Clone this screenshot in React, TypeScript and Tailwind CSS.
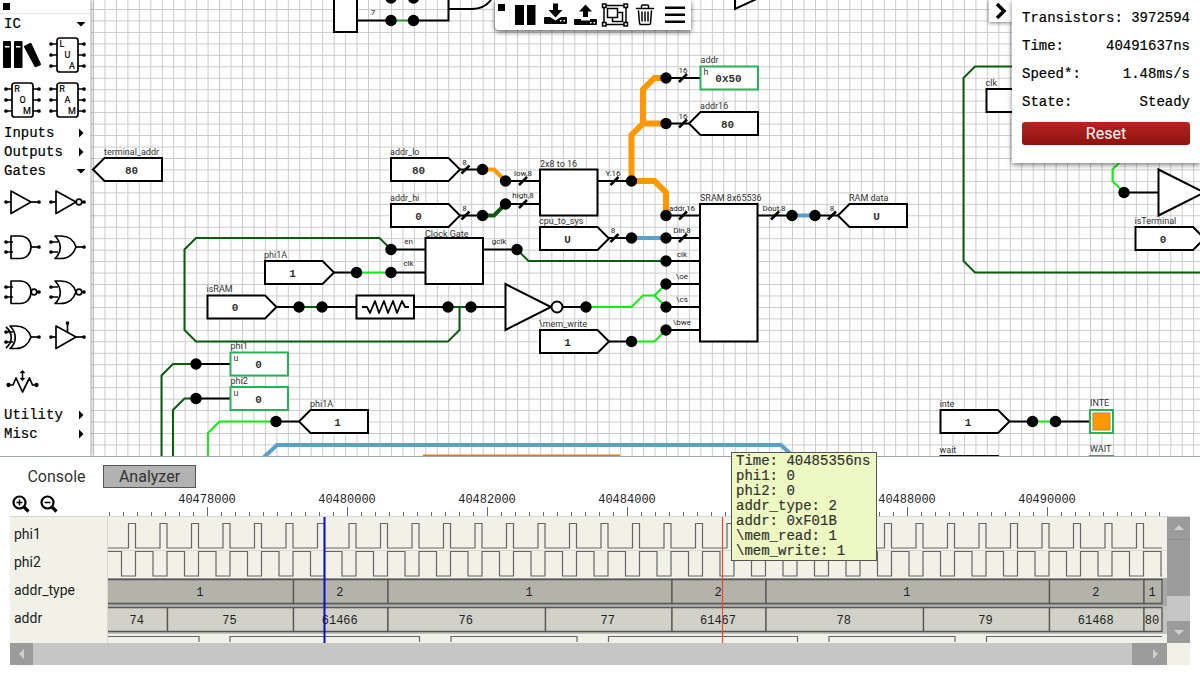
import { ReactNode, useState } from "react";

const DARK = "#0b5c0f";
const LIME = "#12ee12";
const ORANGE = "#ff9800";
const BLUE = "#5b9fca";
const PROBE = "#25b356";
const MONO = "font-['Liberation_Mono',monospace]";
const SANS = "font-[Roboto,sans-serif]";

/* ---------- palette icons ---------- */

const Chip = ({ letters }: { letters: string }) => (
  <>
    <rect x="12" y="5" width="21" height="34" rx="2.5" />
    {[11, 22, 33].map((y) => (
      <g key={y}>
        <path d={`M6 ${y}H12M33 ${y}H39`} />
        <circle cx="6" cy={y} r="1" fill="#000" />
        <circle cx="39" cy={y} r="1" fill="#000" />
      </g>
    ))}
    <g className={SANS} fontSize="9" fill="#000" stroke="#000" strokeWidth="0.2" textAnchor="middle">
      <text x="17" y="14">{letters[0]}</text>
      <text x="22.500" y="25">{letters[1]}</text>
      <text x="27" y="36">{letters[2]}</text>
    </g>
  </>
);

const twoInputs = (
  <>
    <path d="M6 17H13M6 27H13" />
    <circle cx="6" cy="17" r="1" fill="#000" />
    <circle cx="6" cy="27" r="1" fill="#000" />
  </>
);

const output = (
  <>
    <path d="M31 22H39" />
    <circle cx="39" cy="22" r="1" fill="#000" />
  </>
);

const invertedOutput = (
  <>
    <circle cx="34" cy="22" r="2.8" fill="#fff" />
    <path d="M37 22H39" />
    <circle cx="39" cy="22" r="1" fill="#000" />
  </>
);

const oneInput = (
  <>
    <path d="M6 22H11" />
    <circle cx="6" cy="22" r="1" fill="#000" />
  </>
);

const andBody = <path d="M11 11H20C27 11 31 16 31 22S27 33.500 20 33.500H11Z" />;
const orBody = <path d="M10 11H16C24 11 29 16 31 22C29 28 24 33.500 16 33.500H10C17 27 17 18 10 11Z" />;
const triangle = <path d="M11 11L31 22L11 33.500Z" />;

const books = (
  <g fill="#000" stroke="none">
    <path fillRule="evenodd" d="M4 8H10Q11 8 11 9V34Q11 35 10 35H4Q3 35 3 34V9Q3 8 4 8ZM5 13V14.500H9.500V13Z" />
    <path fillRule="evenodd" d="M15 8H21.500Q22.500 8 22.500 9V34Q22.500 35 21.500 35H15Q14 35 14 34V9Q14 8 15 8ZM16 13V14.500H20.500V13Z" />
    <path d="M24 13L30 10Q31 9.500 31.500 10.500L41 31Q41 32 40 32.500L36 34Q35 34.500 34.500 33.500L24 14Z" />
  </g>
);

const icParts: [string, ReactNode][] = [
  ["Library", books],
  ["Lua", <Chip letters="LUA" />],
  ["ROM", <Chip letters="ROM" />],
  ["RAM", <Chip letters="RAM" />],
];

const gateParts: [string, ReactNode][] = [
  ["Buffer", <>{oneInput}{triangle}{output}</>],
  ["Not", <>{oneInput}{triangle}{invertedOutput}</>],
  ["And", <>{twoInputs}{andBody}{output}</>],
  ["Or", <>{twoInputs}{orBody}{output}</>],
  ["Nand", <>{twoInputs}{andBody}{invertedOutput}</>],
  ["Nor", <>{twoInputs}{orBody}{invertedOutput}</>],
  ["Xor", <>{twoInputs}{orBody}<path d="M6 12C13 18 13 27 6 33" />{output}</>],
  ["Tri-state", <>{oneInput}{triangle}{output}<path d="M22.500 8V17" /><circle cx="22.500" cy="8" r="1" fill="#000" /></>],
  [
    "Pull",
    <>
      <circle cx="8.500" cy="25" r="1.300" fill="#000" />
      <circle cx="36.500" cy="25" r="1.300" fill="#000" />
      <path d="M9 25H13L16 18L22.500 32L29.500 18L32.500 25H36" />
      <path d="M22.500 11V20M20.500 13L22.500 11L24.500 13M20.500 18L22.500 20L24.500 18" strokeWidth="1.500" />
    </>,
  ],
];

const PaletteGrid = ({ parts }: { parts: [string, ReactNode][] }) => (
  <div className="grid grid-cols-2">
    {parts.map(([name, icon]) => (
      <button key={name} aria-label={name} className="size-[45px]">
        <svg viewBox="0 0 45 45" className="size-full" fill="none" stroke="#000" strokeWidth="1.700" strokeLinejoin="round">
          {icon}
        </svg>
      </button>
    ))}
  </div>
);

const PaletteHeader = ({ title, open = false }: { title: string; open?: boolean }) => (
  <button aria-expanded={open} className={`flex h-[19px] w-full items-center justify-between px-1 text-sm leading-none ${MONO}`}>
    <span className="[-webkit-text-stroke:0.2px_#000]">{title}</span>
    <svg className="size-[10px]" viewBox="0 0 10 10">
      {open ? <path d="M0.500 3H9.500L5 7.500Z" /> : <path d="M3 0.500V9.500L7.500 5Z" />}
    </svg>
  </button>
);

const Palette = () => (
  <aside className="z-10 w-[91px] shrink-0 border-r border-gray-300 bg-white shadow-[1px_0_3px_rgba(0,0,0,0.3)]">
    <div className="flex h-[14px] items-center border-b border-gray-200 pl-[3px]">
      <span className="size-[7px] bg-black" />
    </div>
    <PaletteHeader title="IC" open />
    <PaletteGrid parts={icParts} />
    <PaletteHeader title="Inputs" />
    <PaletteHeader title="Outputs" />
    <PaletteHeader title="Gates" open />
    <PaletteGrid parts={gateParts} />
    <PaletteHeader title="Utility" />
    <PaletteHeader title="Misc" />
  </aside>
);

/* ---------- circuit ---------- */

type TagProps = { x: number; y: number; label: string; value?: string };

const Label = ({ x, y, children }: { x: number; y: number; children: ReactNode }) => (
  <text x={x} y={y} fontSize="9" fill="#333">{children}</text>
);

const Pin = ({ x, y, children }: { x: number; y: number; children: ReactNode }) => (
  <text x={x} y={y} fontSize="8" fill="#222" textAnchor="middle">{children}</text>
);

const Value = ({ x, y, children }: { x: number; y: number; children: ReactNode }) => (
  <text x={x} y={y + 4} fontSize="11" fontWeight="700" fill="#333" textAnchor="middle" className={MONO}>{children}</text>
);

const InputTag = ({ x, y, label, value }: TagProps) => (
  <g>
    <path d={`M${x} ${y - 11.5}h57.500l11.500 11.500l-11.500 11.500h-57.500z`} fill="#fff" stroke="#000" strokeWidth="2" />
    <Label x={x - 1} y={y - 15}>{label}</Label>
    {value && <Value x={x + 27.5} y={y}>{value}</Value>}
  </g>
);

const OutputTag = ({ x, y, label, value }: TagProps) => (
  <g>
    <path d={`M${x} ${y}l11.500 -11.500h57.500v23h-57.500z`} fill="#fff" stroke="#000" strokeWidth="2" />
    <Label x={x + 11} y={y - 15}>{label}</Label>
    <Value x={x + 38.5} y={y}>{value}</Value>
  </g>
);

const Probe = ({ x, y, label, value, mode }: TagProps & { mode: string }) => (
  <g>
    <rect x={x} y={y - 11.5} width="57.500" height="23" fill="#fff" stroke={PROBE} strokeWidth="2" />
    <Label x={x} y={y - 15}>{label}</Label>
    <text x={x + 3} y={y - 3} fontSize="9" fill="#333">{mode}</text>
    <Value x={x + 28} y={y}>{value}</Value>
  </g>
);

const wires = [
  { color: DARK, width: 2, d: "M391 249.500L379.500 238H196L184.500 249.500V330L196 341.500H448L459.500 330V307" },
  { color: DARK, width: 2, d: "M448 307H471M299 307H322M517 249.500L528.500 261H666" },
  { color: DARK, width: 2, d: "M196 364H173L161.500 375.500V900M196 398.500H184.500L173 410V900" },
  { color: DARK, width: 2, d: "M1200 66.500H975L963.500 78V261L975 272.500H1400" },
  { color: "#2a9a2a", width: 2, d: "M391 20.500H413" },
  { color: LIME, width: 2, d: "M356.500 272.500H391M276 421.500H219.500L208 433V900M1032.500 421.500H1055" },
  { color: LIME, width: 2, d: "M586 307H631.500L643 295.500H654.500L666 284M654.500 295.500L666 307" },
  { color: LIME, width: 2, d: "M631.500 341.500H654.500L666 330M1124 158L1112.500 169.500V181L1124 192.500" },
  { color: ORANGE, width: 4, d: "M482.500 169.500H494L505.500 181" },
  { color: DARK, width: 4, d: "M482.500 215.500H494L505.500 204" },
  { color: ORANGE, width: 6, d: "M666 78H654.500L643 89.500V123.500L631.500 135V181H654.500L666 192.500V215.500M643 123.500H666" },
  { color: BLUE, width: 4, d: "M631.500 238H666M792 215.500H815M262 459L277 445H781L796 459" },
  { color: "#d98200", width: 3, d: "M423 456H620" },
];

const leads =
  "M459.500 169.500H482.500M459.500 215.500H482.500M505.500 181H540M505.500 204H540M597.500 181H631.500" +
  "M666 78H700M666 123.500H689M608.500 238H631.500M666 215.500H700M666 238H700M666 261H700M666 284H700" +
  "M666 307H700M666 330H700M757.500 215.500H792M815 215.500H838M391 249.500H425M391 272.500H425" +
  "M482.500 249.500H517M333.500 272.500H356.500M276 307H299M322 307H357M414 307H448M471 307H506" +
  "M563 307H586M608.500 341.500H631.500M196 364H230M196 398.500H230M276 421.500H299" +
  "M357 20.500H391M413 20.500H448.500V0M448.500 9H472Q484 9 491 0M1124 192.500H1158M1009 421.500H1032.500M1055 421.500H1089";

const slashes: [number, number][] = [
  [465.5, 169.5], [465.5, 215.5], [523, 181], [523, 204], [614.5, 181], [683, 78], [683, 123.5],
  [614.5, 238], [683, 215.5], [683, 238], [775, 215.5], [832, 215.5],
];

const dots: [number, number][] = [
  [391, -2], [413.5, -2], [391, 20.5], [413.5, 20.5], [482.5, 169.5], [482.5, 215.5], [505.5, 181],
  [505.5, 204], [631.5, 181], [666, 78], [666, 123.5], [666, 215.5], [631.5, 238], [666, 238],
  [666, 261], [666, 284], [666, 307], [666, 330], [792, 215.5], [815, 215.5], [391, 249.5],
  [391, 272.5], [517, 249.5], [356.5, 272.5], [299, 307], [322, 307], [448, 307], [471, 307],
  [586, 307], [631.5, 341.5], [196, 364], [196, 398.5], [276, 421.5], [1124, 192.5],
  [1032.5, 421.5], [1055.5, 421.5],
];

const pins: [number, number, string][] = [
  [464.5, 165, "8"], [464.5, 211, "8"], [523, 176, "low,8"], [523, 198, "high,8"],
  [613, 176, "Y.16"], [683, 73, "16"], [683, 119, "16"], [613, 233, "8"], [682, 211, "addr,16"],
  [682, 233, "Din,8"], [682, 257, "clk"], [682, 279, "\\oe"], [682, 302, "\\cs"], [682, 325, "\\bwe"],
  [774, 211, "Dout,8"], [832, 211, "8"], [408.5, 244, "en"], [408.5, 266, "clk"], [499, 244, "gclk"],
  [373, 15, "7"],
];

const Circuit = () => (
  <svg className={`absolute inset-0 size-full ${SANS}`} role="img" aria-label="Circuit">
    <defs>
      <pattern id="grid" x="93" y="9" width="11.460" height="11.460" patternUnits="userSpaceOnUse">
        <path d="M0.500 0V11.460M0 0.500H11.460" stroke="#cacaca" strokeWidth="1" />
      </pattern>
    </defs>
    <g transform="translate(-91 0)">
      <rect x="91" width="3000" height="2000" fill="url(#grid)" />
      <path d={leads} fill="none" stroke="#000" strokeWidth="2" />
      {wires.map(({ color, width, d }) => (
        <path key={d} d={d} fill="none" stroke={color} strokeWidth={width} />
      ))}
      <g fill="#fff" stroke="#000" strokeWidth="2">
        <rect x="334" y="-10" width="23" height="42" />
        <path d="M735 -20V9L778 -11" />
        <rect x="540" y="169.500" width="57.500" height="46" />
        <rect x="700" y="204" width="57.500" height="137.500" />
        <rect x="425.500" y="238" width="57.500" height="46" />
        <rect x="356.500" y="295.500" width="57.500" height="23" />
        <path d="M505.500 284L551 307L505.500 330Z" />
        <circle cx="557" cy="307" r="5.500" />
        <path d="M1158.500 169.500L1204 192.500L1158.500 215.500Z" />
      </g>
      <path d="M362 307H367L370 313L375 301L379 313L384 301L388 313L393 301L397 313L402 301L405 307H409" fill="none" stroke="#000" strokeWidth="1.800" strokeLinejoin="round" />
      {slashes.map(([x, y]) => (
        <path key={`${x}-${y}`} d={`M${x - 4} ${y + 4}L${x + 4} ${y - 4}`} stroke="#000" strokeWidth="2.500" />
      ))}
      {pins.map(([x, y, name]) => (
        <Pin key={`${x}-${y}`} x={x} y={y}>{name}</Pin>
      ))}
      {dots.map(([x, y]) => (
        <circle key={`${x}-${y}`} cx={x} cy={y} r="5.700" />
      ))}
      <Label x={540} y={167}>2x8 to 16</Label>
      <Label x={425} y={237}>Clock Gate</Label>
      <Label x={700} y={201}>SRAM 8x65536</Label>

      <OutputTag x={93} y={169.5} label="terminal_addr" value="80" />
      <InputTag x={391} y={169.5} label="addr_lo" value="80" />
      <InputTag x={391} y={215.5} label="addr_hi" value="0" />
      <InputTag x={540} y={238.5} label="cpu_to_sys" value="U" />
      <InputTag x={265} y={272.5} label="phi1A" value="1" />
      <InputTag x={207.5} y={307} label="isRAM" value="0" />
      <InputTag x={540} y={341.5} label="\mem_write" value="1" />
      <InputTag x={986.5} y={100.5} label="clk" />
      <InputTag x={1135.5} y={238.5} label="isTerminal" value="0" />
      <InputTag x={940.5} y={421.5} label="inte" value="1" />
      <InputTag x={940.5} y={467.5} label="wait" />
      <OutputTag x={689} y={123.5} label="addr16" value="80" />
      <OutputTag x={838} y={215.5} label="RAM data" value="U" />
      <OutputTag x={299} y={421.5} label="phi1A" value="1" />
      <Probe x={700.5} y={78} label="addr" value="0x50" mode="h" />
      <Probe x={230.5} y={364} label="phi1" value="0" mode="u" />
      <Probe x={230.5} y={398.5} label="phi2" value="0" mode="u" />

      <Label x={1090} y={406}>INTE</Label>
      <rect x="1090" y="410" width="23" height="23" fill="#fff" stroke={PROBE} strokeWidth="2" />
      <rect x="1093" y="413" width="17" height="17" fill={ORANGE} stroke="#a98a4a" strokeWidth="1" />
      <Label x={1090} y={452}>WAIT</Label>
      <rect x="1090" y="456" width="23" height="23" fill="#fff" stroke={PROBE} strokeWidth="2" />
    </g>
  </svg>
);

const tools: [string, ReactNode][] = [
  ["Pause", <path d="M5 5H14V25H5ZM17 5H25.500V25H17Z" />],
  [
    "Load",
    <>
      <path d="M13 3.500H18V10H22.500L15.500 17.500L8.500 10H13Z" />
      <path fillRule="evenodd" d="M5 17H10L15.500 20.500L21 17H26Q27 17 27 18V23Q27 24 26 24H5Q4 24 4 23V18Q4 17 5 17ZM20 20V21.500H21.500V20ZM23.500 20V21.500H25V20Z" />
    </>,
  ],
  [
    "Save",
    <>
      <path d="M13 17H18V11.500H22L15.500 4.500L9 11.500H13Z" />
      <path fillRule="evenodd" d="M5 19H11V20.500H20V19H26Q27 19 27 20V24Q27 25 26 25H5Q4 25 4 24V20Q4 19 5 19ZM20 22V23.500H21.500V22ZM23.500 22V23.500H25V22Z" />
    </>,
  ],
  [
    "Group",
    <g fill="none" stroke="#000" strokeWidth="1.500">
      <path d="M4 5.500H26V24.500H4Z" />
      <path d="M7.500 8.500H17.500V17.500H7.500Z" />
      <path d="M17.500 12.500H22.500V21.500H12.500V17.500" />
      <g fill="#fff">
        <path d="M2.500 4H6V7.500H2.500ZM24 4H27.500V7.500H24ZM2.500 22.500H6V26H2.500ZM24 22.500H27.500V26H24Z" />
      </g>
    </g>,
  ],
  [
    "Delete",
    <g fill="none" stroke="#000" strokeWidth="1.500" strokeLinejoin="round" strokeLinecap="round">
      <path d="M6.500 8.500H23.500M11.500 8V6Q11.500 5 12.500 5H17.500Q18.500 5 18.500 6V8" />
      <path d="M8.500 11L9.500 23Q9.500 24.500 11 24.500H19Q20.500 24.500 20.500 23L21.500 11" />
      <path d="M12 12V21M15 12V21M18 12V21" />
    </g>,
  ],
  ["Menu", <path d="M5 6.500H25V9H5ZM5 13.500H25V16H5ZM5 20.500H25V23H5Z" />],
];

const Toolbar = () => (
  <div className="absolute left-[404px] top-0 flex h-[30px] rounded-bl bg-white pr-px shadow-[0_2px_5px_rgba(0,0,0,0.6)]">
    <div className="w-[15px] border-r border-gray-100 pl-[3px] pt-1">
      <div className="size-[7px] bg-black" />
    </div>
    {tools.map(([name, icon]) => (
      <button key={name} aria-label={name} className="size-[30px]">
        <svg viewBox="0 0 30 30" className="size-full">{icon}</svg>
      </button>
    ))}
  </div>
);

const stats = [
  ["Transistors:", "3972594"],
  ["Time:", "40491637ns"],
  ["Speed*:", "1.48ms/s"],
  ["State:", "Steady"],
];

const InfoPanel = () => (
  <div className="absolute right-0 top-0 flex items-start">
    <button aria-label="Collapse" className="flex h-[22px] w-[23px] items-center justify-center bg-white shadow-[0_1px_4px_rgba(0,0,0,0.5)]">
      <svg viewBox="0 0 14 16" className="h-4 w-3.5" fill="none" stroke="#000" strokeWidth="3.500">
        <path d="M3 1L10 8L3 15" />
      </svg>
    </button>
    <div className="w-[188px] bg-white px-[10px] pb-[18px] pt-1 shadow-[0_2px_5px_rgba(0,0,0,0.5)]">
      <dl className={`text-sm ${MONO} [-webkit-text-stroke:0.2px_#000]`}>
        {stats.map(([name, value]) => (
          <div key={name} className="flex h-7 items-center justify-between">
            <dt>{name}</dt>
            <dd>{value}</dd>
          </div>
        ))}
      </dl>
      <button className={`mt-1.5 h-[23px] w-full rounded-[3px] bg-linear-to-b from-[#b52522] to-[#8e1210] text-base leading-none text-white ${SANS}`}>
        Reset
      </button>
    </div>
  </div>
);

/* ---------- analyzer ---------- */

const START = 108;
const END = 1162;
const PERIOD = 31.5;

const clockPath = (rise: number, fall: number, top: number, bottom: number, startHigh: boolean) => {
  let d = `M${START} ${startHigh ? top : bottom}`;
  for (let k = 0; k < 34; k++) {
    const r = rise + k * PERIOD;
    const f = fall + k * PERIOD;
    const edges: [number, number][] = startHigh ? [[f, bottom], [r, top]] : [[r, top], [f, bottom]];
    edges.forEach(([x, y]) => {
      if (x < END) d += `H${x}V${y}`;
    });
  }
  return d + `H${END}`;
};

const addrTypes: [number, number, string][] = [
  [108, 293.5, "1"], [293.5, 388, "2"], [388, 672, "1"], [672, 766, "2"], [766, 1049.5, "1"],
  [1049.5, 1144, "2"], [1144, 1162, "1"],
];

const addrs: [number, number, string][] = [
  [108, 167.5, "74"], [167.5, 293.5, "75"], [293.5, 388, "61466"], [388, 545.5, "76"],
  [545.5, 672, "77"], [672, 766, "61467"], [766, 923.5, "78"], [923.5, 1049.5, "79"],
  [1049.5, 1144, "61468"], [1144, 1162, "80"],
];

const Bus = ({ y, fill, gap, items }: { y: number; fill: string; gap: string; items: [number, number, string][] }) => (
  <g>
    <rect x={START} y={y - 1} width="1059" height="28" fill={gap} />
    {items.map(([from, to, value]) => (
      <g key={from}>
        <rect x={from} y={y + 0.5} width={to - from} height="24" fill={fill} />
        <path d={`M${from} ${y + 0.5}H${to}V${y + 24.5}H${from}`} fill="none" stroke="#555" strokeWidth="1.300" />
        <text x={(from + to) / 2 - 1} y={y + 17} fontSize="12" fill="#222" textAnchor="middle">{value}</text>
      </g>
    ))}
    {items.slice(1).map(([from]) => (
      <path key={from} d={`M${from} ${y}V${y + 25}`} stroke="#555" strokeWidth="1.300" />
    ))}
  </g>
);

// the tooltip covers this part of the scale
const scaleLabels = [40478000, 40480000, 40482000, 40484000, 40488000, 40490000];

const Ruler = () => (
  <svg className={`h-7 min-w-0 flex-1 ${MONO}`} aria-label="Time scale">
    <g transform="translate(-108 0)">
      {Array.from({ length: 76 }, (_, i) => {
        const x = 109.5 + i * 14;
        return <path key={i} d={i % 10 === 7 ? `M${x} 19V28` : `M${x} 24V28`} stroke="#666" />;
      })}
      {scaleLabels.map((time) => (
        <text key={time} x={207 + ((time - 40478000) / 2000) * 140} y="15" fontSize="12" fill="#222" textAnchor="middle">{time}</text>
      ))}
    </g>
  </svg>
);

const Waves = () => (
  <svg className={`h-full min-w-0 flex-1 ${MONO}`} role="img" aria-label="Signals">
    <g transform="translate(-108 0)">
      <path d="M108 33.500H1167" stroke="#d8d8d0" />
      <path d={clockPath(128.5, 135.5, 6.5, 31, false)} fill="none" stroke="#666" strokeWidth="1.200" />
      <path d={clockPath(135.5, 121.5, 34.5, 59, true)} fill="none" stroke="#666" strokeWidth="1.200" />
      <Bus y={62} fill="#b3b3aa" gap="#a9a9a4" items={addrTypes} />
      <Bus y={90} fill="#d1d1c8" gap="#c4c4be" items={addrs} />
      <path
        d="M108 119.500H199V125M230 125V119.500H419.500V125M451 125V119.500H577V125M608.500 125V119.500H797.500V125M829 125V119.500H955V125M986.500 125V119.500H1162"
        fill="none"
        stroke="#666"
        strokeWidth="1.200"
      />
      <path d="M722.500 0V127" stroke="#f04438" strokeWidth="1.200" />
      <path d="M324.500 0V127" stroke="#0c0cc8" strokeWidth="2" />
    </g>
  </svg>
);

const ZoomIcon = ({ minus = false }: { minus?: boolean }) => (
  <svg viewBox="0 0 18 18" className="size-[18px]" fill="none" stroke="#000">
    <circle cx="7.500" cy="7.500" r="6" strokeWidth="2.200" />
    <path d="M12 12L16.500 16.500" strokeWidth="3.200" />
    <path d={minus ? "M4.500 7.500H10.500" : "M4.500 7.500H10.500M7.500 4.500V10.500"} strokeWidth="1.500" />
  </svg>
);

const Arrow = ({ d }: { d: string }) => (
  <svg viewBox="0 0 12 12" className="size-3" fill="#d0d0d0">
    <path d={d} />
  </svg>
);

const Analyzer = () => (
  <>
    <div className="flex">
      <div className="flex w-[98px] items-start gap-[10px] pl-0.5 pt-[7px]">
        <button aria-label="Zoom in"><ZoomIcon /></button>
        <button aria-label="Zoom out"><ZoomIcon minus /></button>
      </div>
      <Ruler />
    </div>
    <div className="flex h-[127px] border-t border-[#d8d8d0] bg-[#f1f1e8]">
      <ul className={`w-[98px] shrink-0 overflow-hidden border-r border-[#d8d8d0] pl-1 pt-[3px] text-sm text-[#222] ${SANS}`}>
        {["phi1", "phi2", "addr_type", "addr"].map((name) => (
          <li key={name} className="h-7 leading-7">{name}</li>
        ))}
      </ul>
      <Waves />
      <div className="flex w-[23px] shrink-0 flex-col bg-[#c6c6c6]">
        <button aria-label="Scroll up" className="flex h-[23px] items-center justify-center border-b border-[#939393] bg-[#9b9b9b]">
          <Arrow d="M1 8L6 3L11 8Z" />
        </button>
        <div className="h-14 bg-[#9b9b9b]" />
        <button aria-label="Scroll down" className="mt-auto flex h-[22px] items-center justify-center bg-[#9b9b9b]">
          <Arrow d="M1 4L6 9L11 4Z" />
        </button>
      </div>
    </div>
    <div className="flex h-[22px] bg-[#c6c6c6]">
      <button aria-label="Scroll left" className="flex w-[23px] items-center justify-center bg-[#9b9b9b]">
        <Arrow d="M8 1L3 6L8 11Z" />
      </button>
      <button aria-label="Scroll right" className="ml-auto flex w-[35px] items-center justify-end bg-[#9b9b9b] pr-1.5">
        <Arrow d="M4 1L9 6L4 11Z" />
      </button>
      <div className="w-[23px] bg-[#f1f1e8]" />
    </div>
  </>
);

const hover = ["Time: 40485356ns", "phi1: 0", "phi2: 0", "addr_type: 2", "addr: 0xF01B", "\\mem_read: 1", "\\mem_write: 1"];

const App = () => {
  const [tab, setTab] = useState("Analyzer");

  return (
    <div className="relative flex h-screen flex-col overflow-hidden bg-white text-black">
      <div className="flex min-h-0 flex-1 overflow-hidden">
        <Palette />
        <main className="relative min-w-0 flex-1 overflow-hidden">
          <Circuit />
          <Toolbar />
          <InfoPanel />
        </main>
      </div>
      <section className="z-20 border-t border-gray-400 bg-white px-[10px] pb-[10px] pt-2">
        <div role="tablist" className={`flex text-base ${SANS}`}>
          {["Console", "Analyzer"].map((name) => (
            <button
              key={name}
              role="tab"
              aria-selected={tab === name}
              onClick={() => setTab(name)}
              className={`h-[23px] w-[93px] border leading-none text-[#333] ${
                tab === name ? "border-[#555] bg-[#b2b2b2]" : "border-transparent"
              }`}
            >
              {name}
            </button>
          ))}
        </div>
        <Analyzer />
      </section>
      <div
        role="tooltip"
        className={`absolute bottom-[114px] left-[731px] z-30 border border-[#555] bg-[#edf8c3] py-px pl-1 pr-1.5 text-sm leading-[15px] text-[#333] ${MONO} [-webkit-text-stroke:0.2px_#333]`}
      >
        {hover.map((line) => (
          <p key={line}>{line}</p>
        ))}
      </div>
    </div>
  );
};

export default App;
